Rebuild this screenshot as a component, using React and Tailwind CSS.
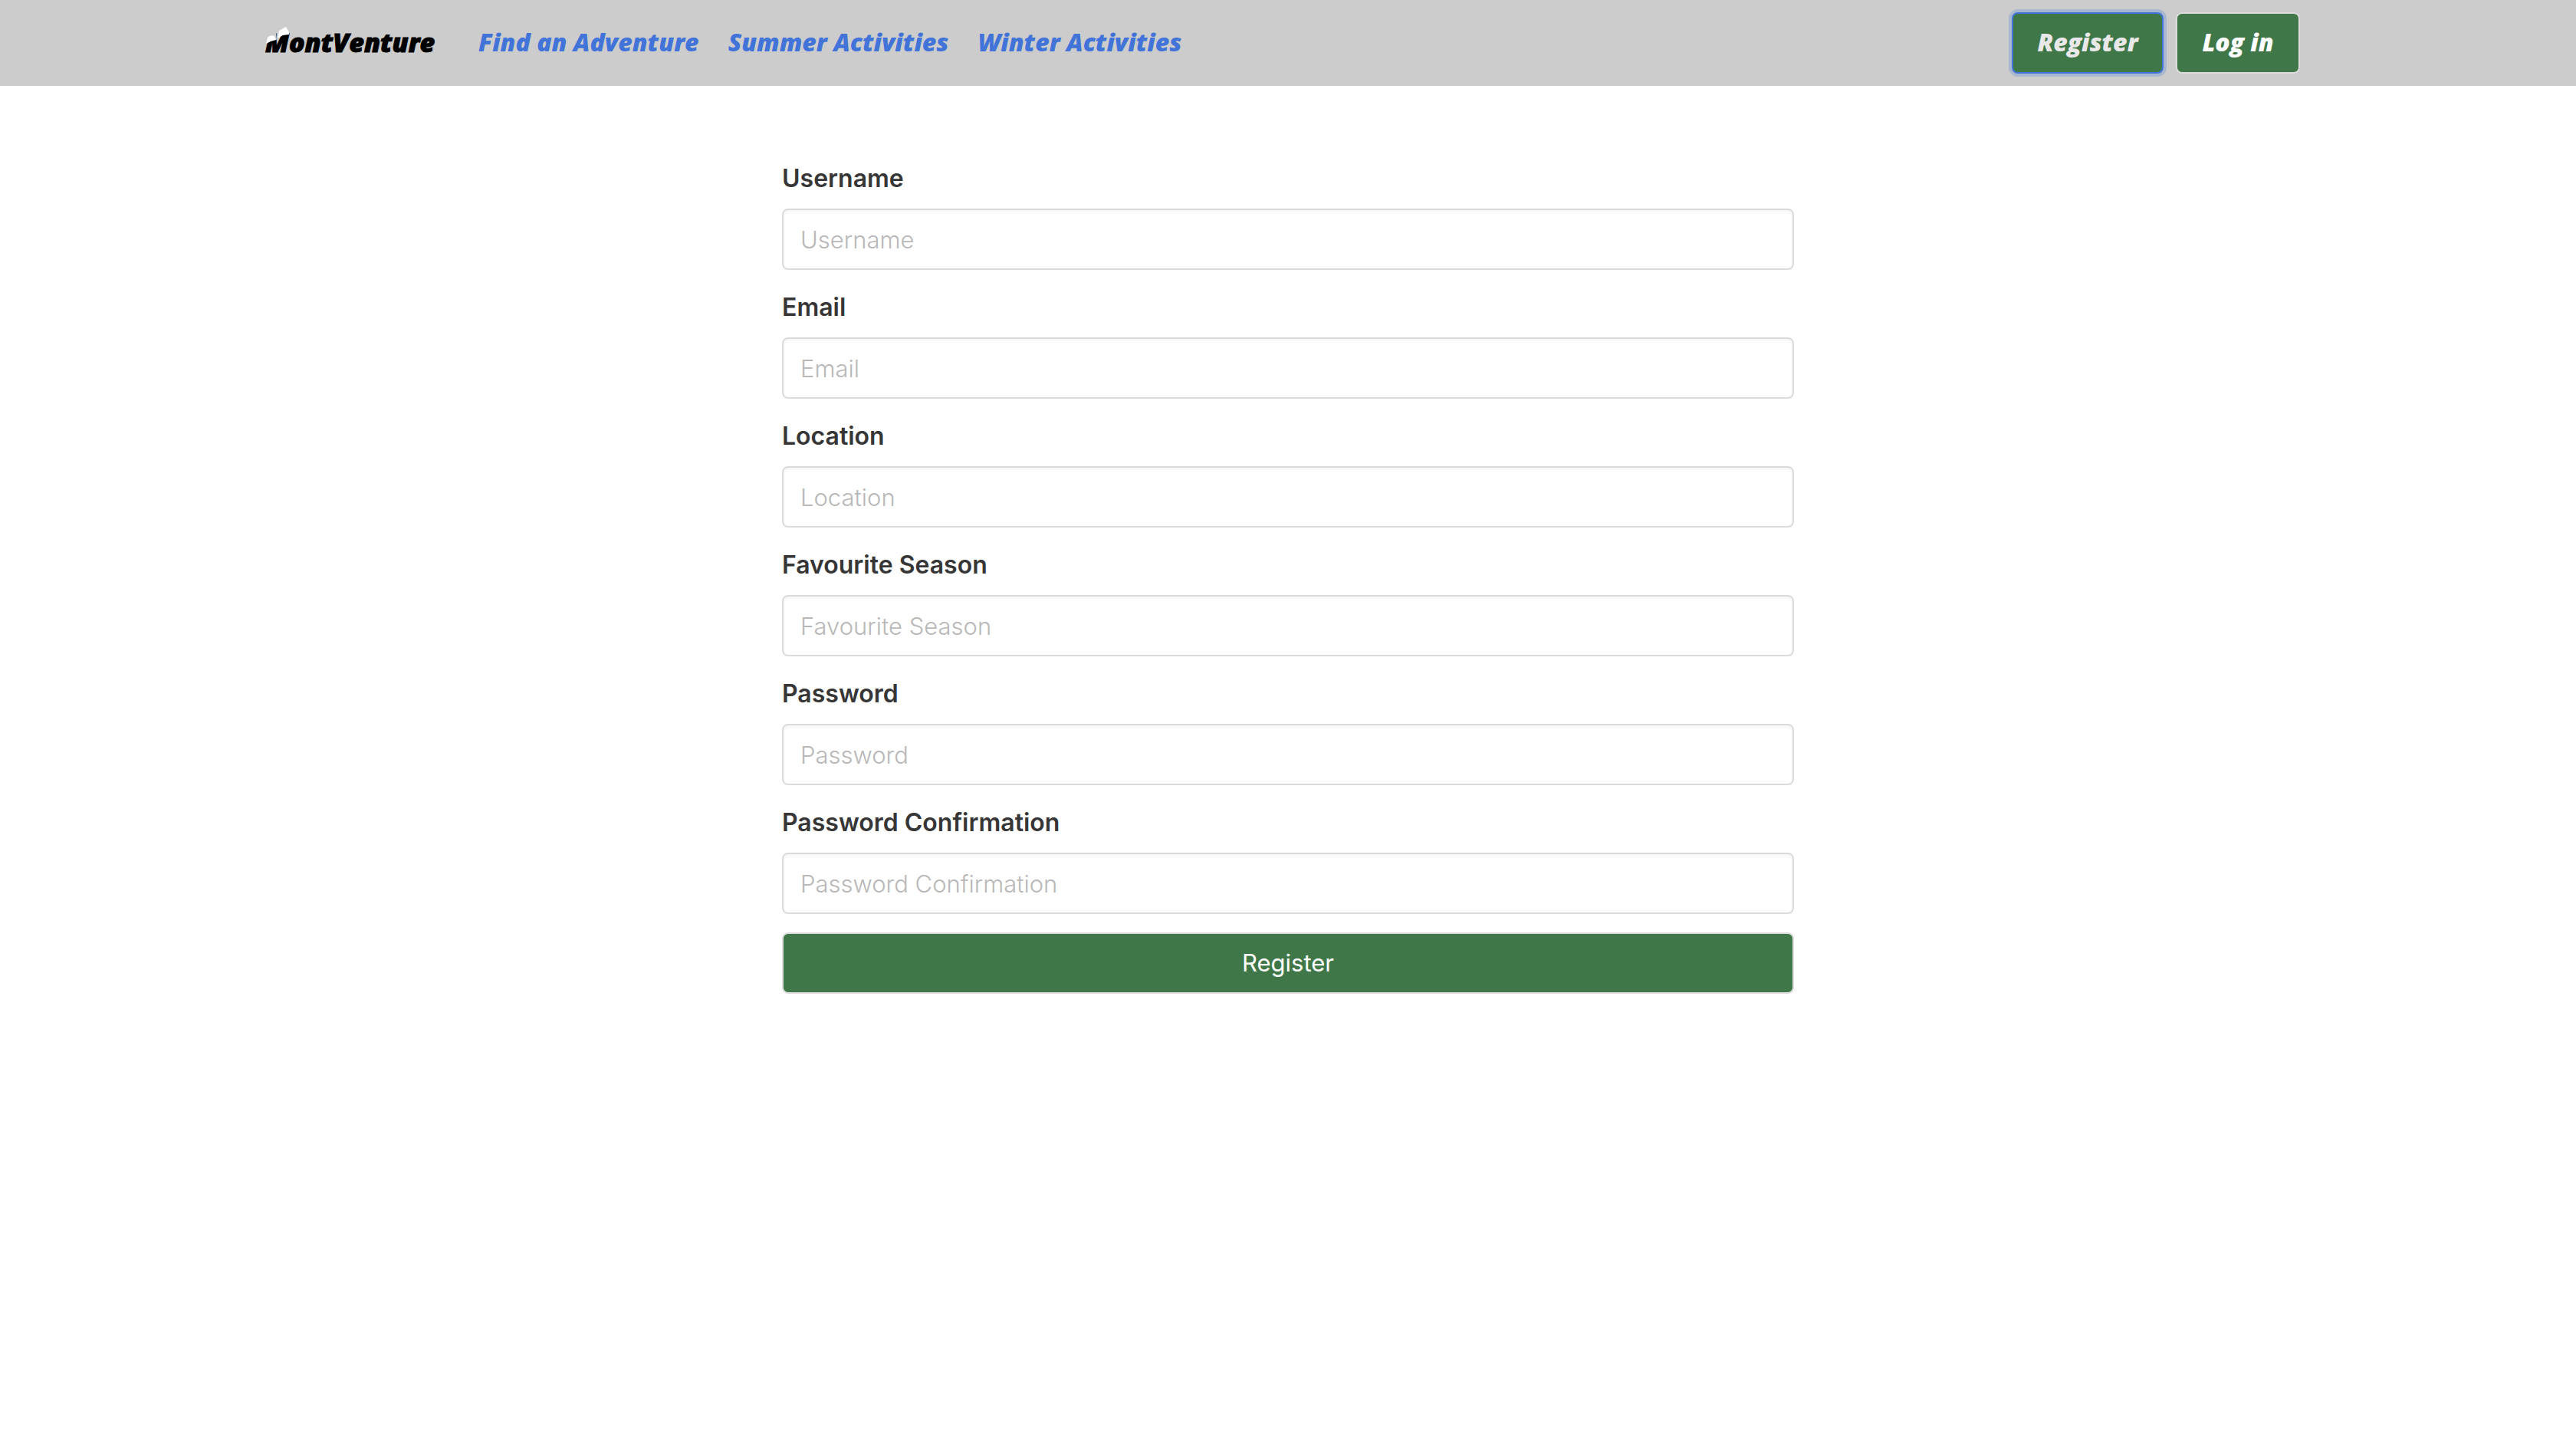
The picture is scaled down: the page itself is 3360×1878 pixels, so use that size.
const links = ["Find an Adventure", "Summer Activities", "Winter Activities"];

const fields = [
  { id: "username", label: "Username", type: "text" },
  { id: "email", label: "Email", type: "email" },
  { id: "location", label: "Location", type: "text" },
  { id: "season", label: "Favourite Season", type: "text" },
  { id: "password", label: "Password", type: "password" },
  { id: "confirmation", label: "Password Confirmation", type: "password" },
];

function Logo() {
  return (
    <svg viewBox="0 0 240 56" className="h-14 w-60" role="img" aria-label="MontVenture">
      <text
        x="10"
        y="40"
        fill="#000"
        stroke="#000"
        strokeWidth="1"
        fontFamily="'Open Sans', sans-serif"
        fontSize="34"
        fontWeight="800"
        fontStyle="italic"
      >
        MontVenture
      </text>
      {/* snow on the two peaks of the M */}
      <path d="M11 29 L12 21 L15 14 L24 14 L25 24 L20 23 Z" fill="#ccc" />
      <path d="M11 29 L13 21 Q17 17 22 19 L24 24 L17 26 Z" fill="#fff" />
      <path d="M26 22 L28 12 L37 7 L41 14 L41 17 L33 18 Z" fill="#fff" />
    </svg>
  );
}

export default function App() {
  return (
    <div className="min-h-screen bg-white font-['Inter',sans-serif] text-[32px] leading-[48px] text-[#363636]">
      <header className="bg-[#cccccc]">
        <nav className="mx-auto flex min-h-28 max-w-[2688px] items-center font-['Open_Sans',sans-serif] font-extrabold italic">
          <a href="#home" className="mr-12 shrink-0">
            <Logo />
          </a>
          <ul className="flex items-center gap-[38px] pb-[3px] text-[#4173d9]">
            {links.map((text) => (
              <li key={text}>
                <a href="#activities">{text}</a>
              </li>
            ))}
          </ul>
          <div className="mr-6 ml-auto flex gap-4">
            <button
              type="button"
              className="h-20 min-w-[198px] rounded-lg border-2 border-[#4173d9] bg-[#3f7748] px-6 pb-[3px] text-[#e8e8e8] ring-4 ring-[#4173d9]/25"
            >
              Register
            </button>
            <button
              type="button"
              className="h-20 min-w-[162px] rounded-lg border-2 border-[#dbdbdb] bg-[#3f7748] px-6 pb-[3px] text-white"
            >
              Log in
            </button>
          </div>
        </nav>
      </header>

      <main className="mx-auto max-w-[1320px] py-24">
        <form className="flex flex-col gap-6">
          {fields.map(({ id, label, type }) => (
            <div key={id} className="flex flex-col gap-[14px]">
              <label htmlFor={id} className="leading-[50px] font-semibold">
                {label}
              </label>
              <input
                id={id}
                type={type}
                placeholder={label}
                className="h-20 w-full rounded-lg border-2 border-[#dbdbdb] bg-white px-[22px] text-[31px] font-light shadow-[inset_0_2px_4px_rgba(10,10,10,0.05)] placeholder:text-[#b8b8b8]"
              />
            </div>
          ))}
          <button type="button" className="h-20 rounded-lg border-2 border-[#dbdbdb] bg-[#3f7748] text-[31px] text-white">
            Register
          </button>
        </form>
      </main>
    </div>
  );
}
